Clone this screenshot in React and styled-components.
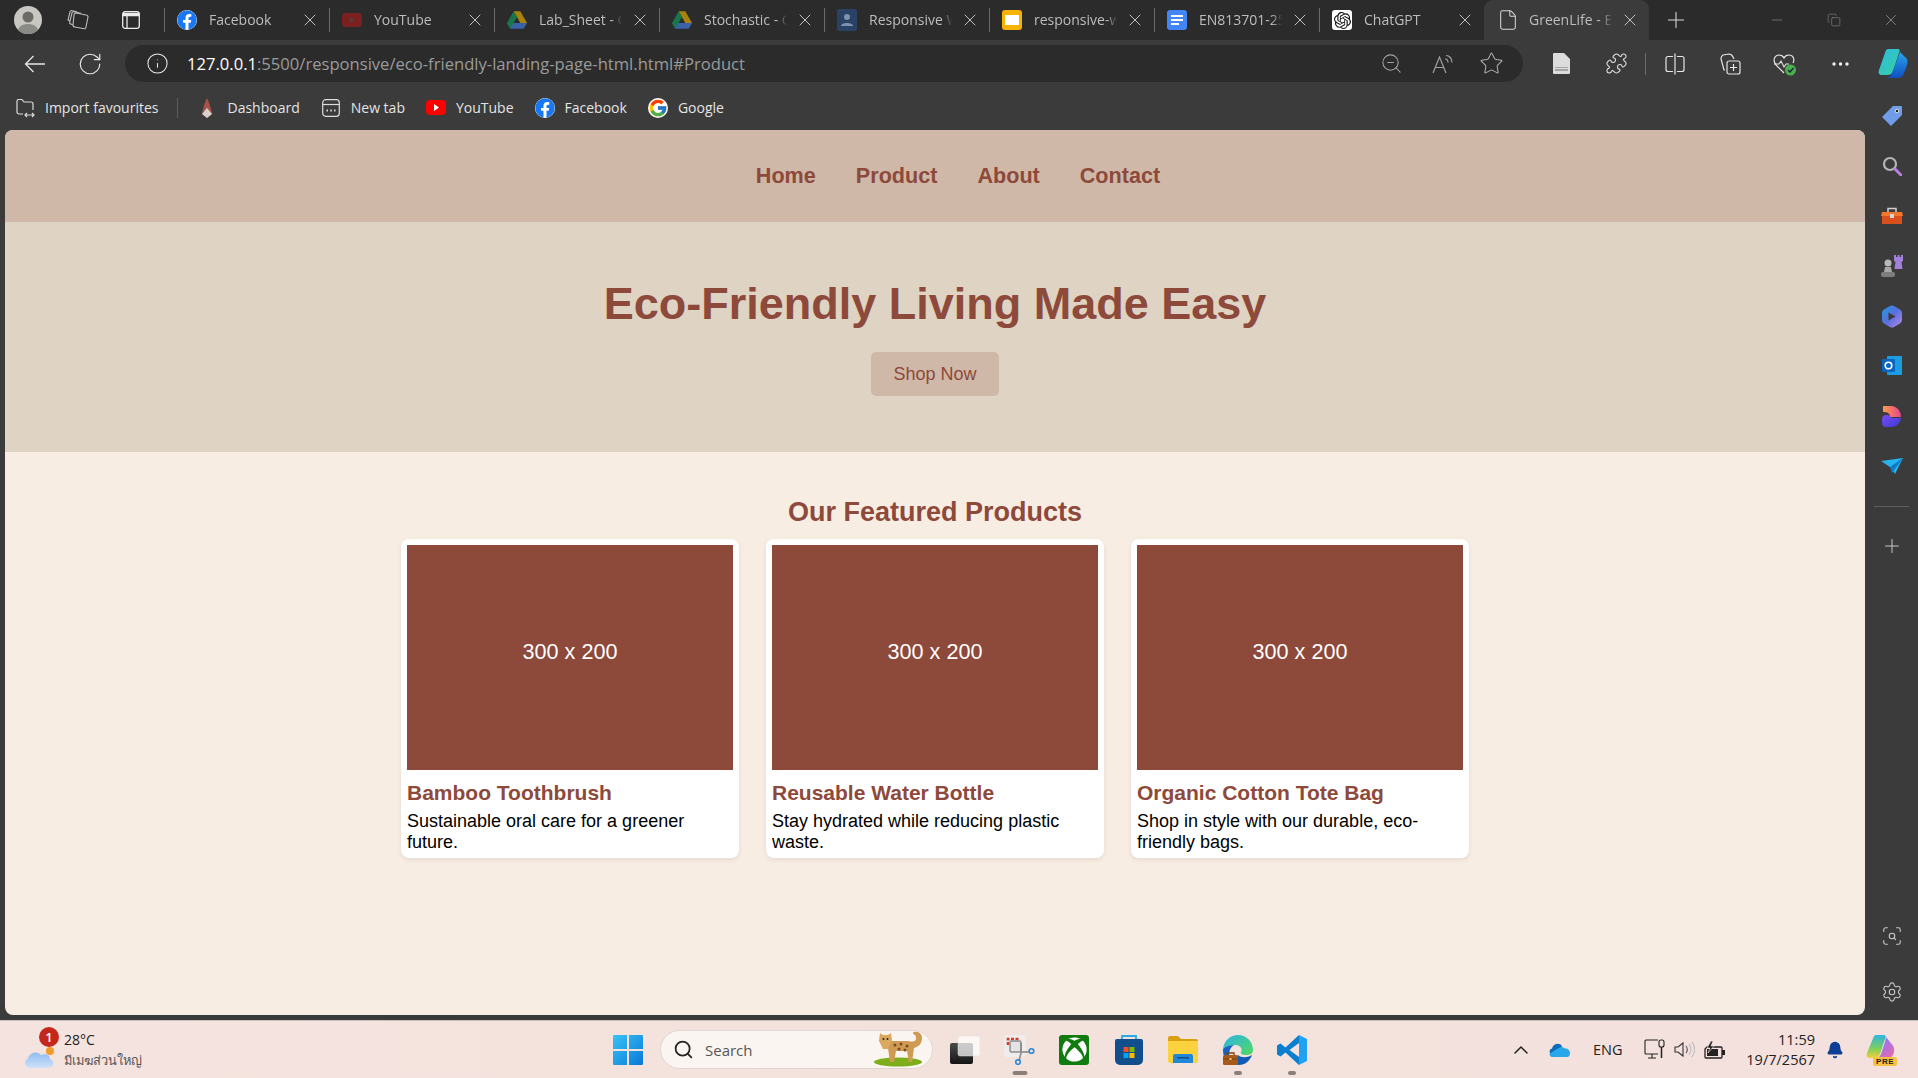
import React from "react";
import styled, { createGlobalStyle } from "styled-components";
import { RotateCw, Info, ZoomOut, Star, Puzzle, Plus, X, Minus, Copy, ChevronUp, Search, File, ScanSearch, Settings, Bell } from "lucide-react";
import { FaFacebook, FaXbox } from "react-icons/fa";
import { FcGoogle } from "react-icons/fc";
import { SiOpenai } from "react-icons/si";

const GlobalStyle = createGlobalStyle`
  html, body { margin: 0; padding: 0; height: 100%; overflow: hidden; }
  * { box-sizing: border-box; }
  body { font-family: "Open Sans", "Noto Sans", sans-serif; background: #3b3b3b; }
`;

/* ---------- small drawings ---------- */

const Drive = () => (
  <svg width="20" height="18" viewBox="0 0 24 21" opacity=".72">
    <path d="M8 0h8l8 14h-8z" fill="#d9a400" />
    <path d="M0 14h24l-4 7H4z" fill="#3f78d8" />
    <path d="M8 0L0 14l4 7 8-14z" fill="#12925a" />
  </svg>
);

const ResponsiveFav = () => (
  <svg width="20" height="22" viewBox="0 0 20 22" opacity=".75">
    <rect width="20" height="22" rx="2" fill="#2c4a7c" />
    <circle cx="10" cy="8" r="3" fill="#9db4d6" />
    <path d="M4 17c0-4 12-4 12 0z" fill="#9db4d6" />
  </svg>
);

const SlidesFav = () => (
  <svg width="20" height="20" viewBox="0 0 20 20">
    <rect width="20" height="20" rx="3" fill="#f6b400" />
    <rect x="3" y="5" width="14" height="10" fill="#fff" />
  </svg>
);

const DocsFav = () => (
  <svg width="20" height="20" viewBox="0 0 20 20">
    <rect width="20" height="20" rx="3" fill="#4285f4" />
    <path d="M4 5h12v2H4zm0 4h12v2H4zm0 4h8v2H4z" fill="#fff" />
  </svg>
);

const GptFav = () => (
  <FavBox>
    <SiOpenai size={17} color="#111" />
  </FavBox>
);

const Avatar = () => (
  <svg width="28" height="28" viewBox="0 0 28 28">
    <circle cx="14" cy="14" r="14" fill="#c9c7c2" />
    <circle cx="14" cy="11" r="5.5" fill="#6b6b68" />
    <path d="M4 24c2-8 18-8 20 0a14 14 0 0 1-20 0z" fill="#8a8a86" />
  </svg>
);

const Workspaces = () => (
  <svg width="22" height="20" viewBox="0 0 22 20" fill="none" stroke="#bdbdbd" strokeWidth="1.1">
    <path d="M9 3l10 2c1 0 2 1 2 2l-2 10c0 1-1 2-2 1.7L8 17c-1 0-2-1-2-2L7 5c0-1 1-2 2-2z" />
    <path d="M6 15L4 14c-1 0-1.5-1-1.3-2L5 3c0-1 1-1.5 2-1.3l7 1.5" />
    <path d="M3 11L1 10 3 2c0-1 1-1.5 2-1.3l5 1" />
  </svg>
);

const TabsIcon = () => (
  <svg width="18" height="18" viewBox="0 0 18 18" fill="none" stroke="#ececec" strokeWidth="1.3">
    <rect x=".7" y=".7" width="16.6" height="16.6" rx="2.5" />
    <path d="M.7 3.5h16.6" strokeWidth="3.5" />
    <path d="M5 5v12" />
  </svg>
);

const BackArrow = () => (
  <svg width="22" height="18" viewBox="0 0 22 18" fill="none" stroke="#e6e6e6" strokeWidth="1.3">
    <path d="M21 9H1.5M9.5 1L1.5 9l8 8" />
  </svg>
);

const ImportFav = () => (
  <svg width="20" height="20" viewBox="0 0 20 20" fill="none" stroke="#dcdcdc" strokeWidth="1.2">
    <path d="M8 16H4a2 2 0 0 1-2-2V3a1.5 1.5 0 0 1 1.5-1.5H7L9 4h7a2 2 0 0 1 2 2v6" />
    <path d="M10 17h9M12 15l-2 2 2 2M17 15l2 2-2 2" />
  </svg>
);

const Rocket = () => (
  <svg width="14" height="20" viewBox="0 0 14 20">
    <path d="M7 0c2 4 4 10 5 16l-5 4-5-4C3 10 5 4 7 0z" fill="#a8534a" />
    <path d="M7 10l5 6-5 4-5-4z" fill="#d8d0cb" />
  </svg>
);

const NewTabFav = () => (
  <svg width="18" height="18" viewBox="0 0 18 18" fill="none" stroke="#dcdcdc" strokeWidth="1.2">
    <rect x=".7" y=".7" width="16.6" height="16.6" rx="3" />
    <path d="M.7 5.5h16.6" />
    <path d="M4.5 11.5H6M8.3 11.5h1.5M12 11.5h1.5" strokeWidth="1.8" />
  </svg>
);

const YtBadge = () => (
  <svg width="20" height="15" viewBox="0 0 20 15">
    <rect width="20" height="15" rx="4" fill="#f00" />
    <path d="M8 4l5 3.5L8 11z" fill="#fff" />
  </svg>
);

const YtDim = () => (
  <svg width="20" height="14" viewBox="0 0 20 14">
    <rect width="20" height="14" rx="4" fill="#7c1f1f" />
    <path d="M8 4l5 3-5 3z" fill="#5c3a3a" />
  </svg>
);

const ReadAloud = () => (
  <svg width="22" height="20" viewBox="0 0 22 20" fill="none" stroke="#a0a0a0" strokeWidth="1.2">
    <path d="M1 19L7.5 3 14 19M3.5 13.5h8" />
    <path d="M13 5c2 0 3 1.5 3 3.5M14 1.5c3.5 0 6 3 6 7" />
  </svg>
);

const PageSave = () => (
  <svg width="17" height="21" viewBox="0 0 17 21">
    <path d="M0 1a1 1 0 0 1 1-1h10l6 6v14a1 1 0 0 1-1 1H1a1 1 0 0 1-1-1z" fill="#dcdcdc" />
    <path d="M2 14h13v4H2z" fill="#a5a5a5" />
    <path d="M2 15.5h13" stroke="#dcdcdc" />
  </svg>
);

const SplitIcon = () => (
  <svg width="20" height="22" viewBox="0 0 20 22" fill="none" stroke="#e6e6e6" strokeWidth="1.2">
    <path d="M8 3.5H3a2 2 0 0 0-2 2v11a2 2 0 0 0 2 2h5M12 3.5h5a2 2 0 0 1 2 2v11a2 2 0 0 1-2 2h-5" />
    <path d="M10 .5v21" />
  </svg>
);

const CollectionsIcon = () => (
  <svg width="21" height="22" viewBox="0 0 21 22" fill="none" stroke="#e6e6e6" strokeWidth="1.2">
    <rect x="7" y="8" width="13" height="13" rx="2" />
    <path d="M13.5 11v7M10 14.5h7" />
    <path d="M5 17H4L1 6c0-2 0-3 2-4l6-1c2 0 3 1 4 3l1 2" />
  </svg>
);

const HealthIcon = () => (
  <svg width="24" height="24" viewBox="0 0 24 24" fill="none">
    <path d="M11 21L3 13C-1 8 2 3 6 3c2 0 4 1 5 3 1-2 3-3 5-3 4 0 6 4 4 8" stroke="#e6e6e6" strokeWidth="1.2" />
    <path d="M1 12h5l2-3 3 6 2-3h3" stroke="#e6e6e6" strokeWidth="1.1" />
    <circle cx="17.5" cy="18" r="5.5" fill="#4caf50" />
    <path d="M15 18l2 2 3.5-4" stroke="#123" strokeWidth="1.2" />
  </svg>
);

const DotsIcon = () => (
  <svg width="17" height="4" viewBox="0 0 17 4" fill="#f0f0f0">
    <circle cx="2" cy="2" r="1.7" />
    <circle cx="8.5" cy="2" r="1.7" />
    <circle cx="15" cy="2" r="1.7" />
  </svg>
);

const CopilotMark = () => (
  <svg width="30" height="29" viewBox="0 0 30 29">
    <defs>
      <linearGradient id="cpA" x1="0" y1="0" x2="1" y2="1">
        <stop offset="0" stopColor="#2fb8e8" />
        <stop offset="1" stopColor="#36d39a" />
      </linearGradient>
      <linearGradient id="cpB" x1="0" y1="0" x2="0" y2="1">
        <stop offset="0" stopColor="#2aa5f0" />
        <stop offset="1" stopColor="#0f4fc0" />
      </linearGradient>
    </defs>
    <path d="M8 1c1-1 2-1 3-1h9c2 0 2 2 1 4l-6 18c-1 3-3 4-6 4H4c-3 0-4-2-3-5z" fill="url(#cpA)" />
    <path d="M22 3l5 5c3 2 3 5 2 8l-3 8c-1 3-3 5-7 5H7c4 0 6-2 7-5l5-13z" fill="url(#cpB)" />
  </svg>
);

const TagIcon = () => (
  <svg width="20" height="20" viewBox="0 0 20 20">
    <path d="M11 0h8a1 1 0 0 1 1 1v8L9 20 0 11z" fill="#6f9de8" />
    <circle cx="15" cy="5" r="1.8" fill="#222" stroke="#ddd" />
  </svg>
);

const SearchSide = () => (
  <svg width="20" height="20" viewBox="0 0 20 20" fill="none">
    <circle cx="8" cy="8" r="6" stroke="#b5b5b5" strokeWidth="2.2" />
    <path d="M13 13l6 6" stroke="#b77fe0" strokeWidth="3" strokeLinecap="round" />
  </svg>
);

const ToolboxIcon = () => (
  <svg width="22" height="18" viewBox="0 0 22 18">
    <path d="M7 5V1.5h8V5" fill="none" stroke="#cfcfcf" strokeWidth="1.5" />
    <path d="M1 5h20l1 4H0z" fill="#f2772b" />
    <path d="M1 9h20v8H1z" fill="#d8501c" />
    <rect x="9" y="7" width="4" height="4" fill="#d5d5d5" />
  </svg>
);

const ChessIcon = () => (
  <svg width="22" height="22" viewBox="0 0 22 22">
    <path d="M13 0h2v2h1.5V0h2v2H20V0h2v6l-1.5 1 1 7h-8l1-7L13 6z" fill="#a27fd8" />
    <circle cx="7" cy="8" r="3.5" fill="#b8b8b8" />
    <path d="M4 12h6l1 5H3z" fill="#a8a8a8" />
    <rect y="17" width="14" height="5" rx="2" fill="#7d7d7d" />
  </svg>
);

const M365Icon = () => (
  <svg width="20" height="23" viewBox="0 0 20 23">
    <defs>
      <linearGradient id="m365" x1="0" y1="0" x2="1" y2="1">
        <stop offset="0" stopColor="#1f9ae0" />
        <stop offset=".5" stopColor="#5a6fdc" />
        <stop offset="1" stopColor="#b98ae6" />
      </linearGradient>
    </defs>
    <path fillRule="evenodd" d="M8 1a4 4 0 0 1 4 0l6 3.5A4 4 0 0 1 20 8v7a4 4 0 0 1-2 3.5L12 22a4 4 0 0 1-4 0l-6-3.5A4 4 0 0 1 0 15V8a4 4 0 0 1 2-3.5zM6.5 7.5v8l7-4z" fill="url(#m365)" />
  </svg>
);

const OutlookIcon = () => (
  <svg width="20" height="20" viewBox="0 0 20 20">
    <rect x="5" y="0" width="15" height="19" rx="1" fill="#1b9de2" />
    <rect x="0" y="3" width="13" height="13" rx="1" fill="#0a64c0" />
    <circle cx="6.5" cy="9.5" r="3.3" fill="none" stroke="#fff" strokeWidth="1.6" />
  </svg>
);

const DesignerIcon = () => (
  <svg width="19" height="21" viewBox="0 0 19 21">
    <defs>
      <linearGradient id="dsA" x1="0" y1="0" x2="1" y2="0">
        <stop offset="0" stopColor="#fb9a4b" />
        <stop offset="1" stopColor="#e8448f" />
      </linearGradient>
      <linearGradient id="dsB" x1="0" y1="0" x2="1" y2="1">
        <stop offset="0" stopColor="#7a4cf0" />
        <stop offset="1" stopColor="#3a3ad8" />
      </linearGradient>
    </defs>
    <path d="M1 0h8c6 0 10 5 10 11H8C8 7 5 6 1 6z" fill="url(#dsA)" />
    <path d="M4 9c4 0 5 2 6 3h9c-1 6-5 9-10 9H4c-3 0-4-2-4-6s1-6 4-6z" fill="url(#dsB)" />
  </svg>
);

const SendIcon = () => (
  <svg width="22" height="16" viewBox="0 0 22 16">
    <path d="M0 3L22 0 14 16 9 9z" fill="#24b4ee" />
    <path d="M9 9L22 0 11 15z" fill="#0f78c8" />
  </svg>
);

const WindowsLogo = () => (
  <svg width="30" height="30" viewBox="0 0 30 30">
    <defs>
      <linearGradient id="winA" x1="0" y1="0" x2="1" y2="1">
        <stop offset="0" stopColor="#39c4f5" />
        <stop offset="1" stopColor="#0878d8" />
      </linearGradient>
    </defs>
    <path d="M0 1a1 1 0 0 1 1-1h13v14H0zM16 0h13a1 1 0 0 1 1 1v13H16zM0 16h14v14H1a1 1 0 0 1-1-1zM16 16h14v13a1 1 0 0 1-1 1H16z" fill="url(#winA)" />
  </svg>
);

const Leopard = () => (
  <svg width="52" height="36" viewBox="0 0 52 36">
    <ellipse cx="24" cy="31" rx="24" ry="4.5" fill="#7fae1c" />
    <path d="M14 10h20c5 1 8 1 8-3 0-4-3-3-3-5 0-2 9-2 9 5 0 6-4 9-8 10l-2 14h-3l-2-11H22l-2 11h-4l-2-14c-2-1-2-4 0-7z" fill="#cf9a52" />
    <circle cx="21" cy="14" r="1.5" fill="#7a4a24" />
    <circle cx="27" cy="13" r="1.5" fill="#7a4a24" />
    <circle cx="33" cy="15" r="1.5" fill="#7a4a24" />
    <circle cx="25" cy="18" r="1.5" fill="#7a4a24" />
    <circle cx="31" cy="19" r="1.5" fill="#7a4a24" />
    <path d="M6 2l3 2h5l3-2 1 8-4 8h-5L5 10z" fill="#dba860" />
    <circle cx="9.5" cy="8" r="1" fill="#222" />
    <circle cx="13.5" cy="8" r="1" fill="#222" />
  </svg>
);

const TaskView = () => (
  <svg width="30" height="30" viewBox="0 0 30 30">
    <defs>
      <linearGradient id="tvA" x1="0" y1="0" x2="0" y2="1">
        <stop offset="0" stopColor="#4a4a4a" />
        <stop offset="1" stopColor="#151515" />
      </linearGradient>
    </defs>
    <rect x="0" y="8" width="23" height="21" rx="2" fill="url(#tvA)" />
    <rect x="8" y="1" width="22" height="20" rx="2" fill="#fff" fillOpacity=".72" stroke="#ddd" strokeWidth=".5" />
  </svg>
);

const SnipIcon = () => (
  <svg width="31" height="30" viewBox="0 0 31 30">
    <rect x="0" y="0" width="22" height="22" rx="3" fill="#efecec" />
    <path d="M4 10V4h12" fill="none" stroke="#d53a2a" strokeWidth="2.6" strokeDasharray="3 1.5" />
    <rect x="6" y="6" width="11" height="11" rx="1.5" fill="#e4e2e2" stroke="#8f8f8f" strokeWidth="1.5" />
    <path d="M17 8v10l-2 8" stroke="#8a8a8a" strokeWidth="1.6" fill="none" />
    <path d="M17 17h8" stroke="#8a8a8a" strokeWidth="1.6" />
    <circle cx="14" cy="27" r="2.3" fill="none" stroke="#2b88d8" strokeWidth="1.6" />
    <circle cx="27.5" cy="16" r="2.3" fill="none" stroke="#2b88d8" strokeWidth="1.6" />
  </svg>
);

const StoreIcon = () => (
  <svg width="30" height="30" viewBox="0 0 30 30">
    <path d="M8 5V1h14v4" fill="none" stroke="#29a9e8" strokeWidth="1.8" />
    <path d="M1 6a2 2 0 0 1 2-2h24a2 2 0 0 1 2 2v19a5 5 0 0 1-5 5H6a5 5 0 0 1-5-5z" fill="#134e8c" />
    <rect x="9.5" y="12" width="5" height="5" fill="#f25022" />
    <rect x="15.5" y="12" width="5" height="5" fill="#7fba00" />
    <rect x="9.5" y="18" width="5" height="5" fill="#00a4ef" />
    <rect x="15.5" y="18" width="5" height="5" fill="#ffb900" />
  </svg>
);

const FolderIcon = () => (
  <svg width="30" height="27" viewBox="0 0 30 27">
    <path d="M0 2a2 2 0 0 1 2-2h8l3 3h15a2 2 0 0 1 2 2v4H0z" fill="#d9a013" />
    <path d="M0 5h30v20a2 2 0 0 1-2 2H2a2 2 0 0 1-2-2z" fill="#fcd33f" />
    <path d="M5 20a2 2 0 0 1 2-2h16a2 2 0 0 1 2 2v7H5z" fill="#2188d9" />
    <rect x="9" y="21" width="12" height="1.5" fill="#0c4f8a" />
  </svg>
);

const EdgeIcon = () => (
  <svg width="30" height="30" viewBox="0 0 30 30">
    <defs>
      <linearGradient id="edgeA" x1="0" y1="0" x2="1" y2="1">
        <stop offset="0" stopColor="#2bb5e8" />
        <stop offset=".9" stopColor="#4ed66b" />
      </linearGradient>
    </defs>
    <path d="M0 14C1 5 8 0 15 0c9 0 15 7 15 15 0 4-3 5-7 5-4 0-6-1-5-3 2-3-1-7-5-7-6 0-11 2-13 4z" fill="url(#edgeA)" />
    <path d="M0 14c3-3 7-4 11-4-4 2-6 8-4 13l-5 0C0 20 0 17 0 14z" fill="#1464c8" />
    <path d="M15 20c3 3 9 3 14 0-2 6-7 10-13 10-3 0-5-1-7-2z" fill="#0f5bb5" />
    <rect x="0" y="20" width="15" height="10" rx="1.5" fill="#a85a1a" />
    <path d="M4 20v-2h7v2" fill="none" stroke="#7a4310" strokeWidth="1.3" />
    <path d="M0 24h15" stroke="#7a4310" />
    <rect x="6.5" y="23" width="2" height="2" fill="#f0c870" />
  </svg>
);

const VscodeIcon = () => (
  <svg width="30" height="30" viewBox="0 0 30 30">
    <path d="M22 0L8.5 12.5l-5-4L0 10.5v9l3.5 2 5-4L22 30v-8l-9.5-7L22 8z" fill="#0a7fd0" />
    <path d="M22 0l8 4v22l-8 4z" fill="#1fa2f2" />
  </svg>
);

const OneDrive = () => (
  <svg width="21" height="14" viewBox="0 0 21 14">
    <path d="M2 11C0 10 0 6 3 5.5 4 1 10-1 13 3l-3 8z" fill="#0f6cbd" />
    <path d="M4 14c-3 0-4-2-3-3.5L8 6c3-2.5 7-2 8-.5 3 0 5 2 5 4.5s-1 4-3 4z" fill="#28a8ea" />
  </svg>
);

const NetworkIcon = () => (
  <svg width="21" height="21" viewBox="0 0 21 21" fill="none" stroke="#222" strokeWidth="1.1">
    <path d="M14 1H2a1 1 0 0 0-1 1v12a1 1 0 0 0 1 1h12" />
    <path d="M4 19h8M8 15v4" />
    <rect x="15" y="1" width="5" height="7" rx="2" />
    <path d="M17.5 8v11" strokeWidth="1.5" />
  </svg>
);

const VolumeIcon = () => (
  <svg width="21" height="17" viewBox="0 0 21 17" fill="none">
    <path d="M1 6h3l5-4v13l-5-4H1z" stroke="#333" strokeWidth="1.1" />
    <path d="M12 5c1.5 2 1.5 5 0 7" stroke="#555" strokeWidth="1.1" />
    <path d="M15 3c2.5 3.5 2.5 7.5 0 11M18 1c3.5 5 3.5 10 0 15" stroke="#bbb" strokeWidth="1.1" />
  </svg>
);

const BatteryIcon = () => (
  <svg width="21" height="18" viewBox="0 0 21 18">
    <path d="M3 6h14a1 1 0 0 1 1 1v9a1 1 0 0 1-1 1H2a1 1 0 0 1-1-1V8z" fill="none" stroke="#222" strokeWidth="1.3" />
    <rect x="18" y="9" width="3" height="5" fill="#222" />
    <rect x="3" y="8" width="11" height="7" fill="#222" />
    <path d="M7 0L3 7h3L4 12l6-7H7l2-5z" fill="#222" stroke="#f4e3df" strokeWidth=".6" />
  </svg>
);

const CopilotRainbow = () => (
  <svg width="29" height="24" viewBox="0 0 29 24">
    <defs>
      <linearGradient id="cpL" x1="0" y1="0" x2="0" y2="1">
        <stop offset="0" stopColor="#2eb6e0" />
        <stop offset=".6" stopColor="#7fd05a" />
        <stop offset="1" stopColor="#f5cf3c" />
      </linearGradient>
      <linearGradient id="cpR" x1="0" y1="0" x2="1" y2="1">
        <stop offset="0" stopColor="#4a8df0" />
        <stop offset=".5" stopColor="#b071e0" />
        <stop offset="1" stopColor="#f06aa0" />
      </linearGradient>
    </defs>
    <path d="M8 1c1-1 2-1 3-1h7c2 0 2 2 1 4l-5 15c-1 3-3 4-6 4H4c-3 0-4-2-3-5z" fill="url(#cpL)" />
    <path d="M20 2l4 5c3 3 5 6 4 10-1 4-3 6-6 6H8c4 0 6-1 7-4l4-12z" fill="url(#cpR)" />
  </svg>
);

const WeatherIcon = () => (
  <WeatherGlyph>
    <svg width="30" height="24" viewBox="0 0 30 24">
      <defs>
        <linearGradient id="cloudA" x1="0" y1="0" x2="0" y2="1">
          <stop offset="0" stopColor="#8fbcf0" />
          <stop offset="1" stopColor="#cfe2fa" />
        </linearGradient>
      </defs>
      <circle cx="25" cy="6" r="4" fill="#f09a2a" />
      <path d="M5 23a5 5 0 0 1-2-9.5C4 8 12 5 16 10c5-2 9 0 9 4 4 1 5 9-2 9z" fill="url(#cloudA)" />
    </svg>
  </WeatherGlyph>
);

/* ---------- data ---------- */

const roundFb = { background: "#fff", borderRadius: "50%" };

const tabs = [
  { title: "Facebook", icon: <FaFacebook size={20} color="#1877f2" style={roundFb} /> },
  { title: "YouTube", icon: <YtDim /> },
  { title: "Lab_Sheet - G", icon: <Drive /> },
  { title: "Stochastic - G", icon: <Drive /> },
  { title: "Responsive W", icon: <ResponsiveFav /> },
  { title: "responsive-w", icon: <SlidesFav /> },
  { title: "EN813701-25", icon: <DocsFav /> },
  { title: "ChatGPT", icon: <GptFav /> },
  { title: "GreenLife - E", icon: <File size={22} color="#d8d8d8" strokeWidth={1.1} />, active: true },
];

const bookmarks = [
  { title: "Dashboard", icon: <Rocket /> },
  { title: "New tab", icon: <NewTabFav /> },
  { title: "YouTube", icon: <YtBadge /> },
  { title: "Facebook", icon: <FaFacebook size={20} color="#1877f2" style={roundFb} /> },
  { title: "Google", icon: <FcGoogle size={20} style={roundFb} /> },
];

const products = [
  { title: "Bamboo Toothbrush", text: "Sustainable oral care for a greener future." },
  { title: "Reusable Water Bottle", text: "Stay hydrated while reducing plastic waste." },
  { title: "Organic Cotton Tote Bag", text: "Shop in style with our durable, eco-friendly bags." },
];

/* ---------- page ---------- */

function App() {
  return (
    <Screen>
      <GlobalStyle />
      <TabStrip>
        <StripLeft>
          <Avatar />
          <Workspaces />
          <TabsIcon />
        </StripLeft>
        {tabs.map((t, i) => (
          <Tab key={t.title} $active={t.active} $noSep={i > 0 && tabs[i - 1].active}>
            <TabFav>{t.icon}</TabFav>
            <TabTitle>{t.title}</TabTitle>
            <X size={20} color="#d0d0d0" strokeWidth={1.1} />
          </Tab>
        ))}
        <NewTab>
          <Plus size={26} color="#d8d8d8" strokeWidth={1} />
        </NewTab>
        <WindowButtons>
          <Minus size={16} color="#7c7c7c" strokeWidth={1.2} />
          <Copy size={14} color="#7c7c7c" strokeWidth={1.2} />
          <X size={18} color="#8a8a8a" strokeWidth={1.2} />
        </WindowButtons>
      </TabStrip>

      <Toolbar>
        <ToolButton><BackArrow /></ToolButton>
        <ToolButton><RotateCw size={26} strokeWidth={1.1} /></ToolButton>
        <Address>
          <Info size={23} color="#e8e8e8" strokeWidth={1.1} />
          <Url><b>127.0.0.1</b>:5500/responsive/eco-friendly-landing-page-html.html#Product</Url>
          <AddressIcons>
            <ZoomOut size={23} color="#a0a0a0" strokeWidth={1.1} />
            <ReadAloud />
            <Star size={25} color="#b0b0b0" strokeWidth={1} />
          </AddressIcons>
        </Address>
        <ToolGroup>
          <ToolButton><PageSave /></ToolButton>
          <ToolButton><Puzzle size={23} strokeWidth={1.1} /></ToolButton>
          <ToolDivider />
          <ToolButton><SplitIcon /></ToolButton>
          <ToolButton><CollectionsIcon /></ToolButton>
          <ToolButton><HealthIcon /></ToolButton>
          <ToolButton><DotsIcon /></ToolButton>
          <CopilotSlot><CopilotMark /></CopilotSlot>
        </ToolGroup>
      </Toolbar>

      <Body>
        <Main>
          <BookmarkBar>
            <Bookmark>
              <ImportFav />
              <span>Import favourites</span>
            </Bookmark>
            <BookmarkDivider />
            {bookmarks.map((b) => (
              <Bookmark key={b.title}>
                <BookmarkFav>{b.icon}</BookmarkFav>
                <span>{b.title}</span>
              </Bookmark>
            ))}
          </BookmarkBar>

          <Page>
            <Nav>
              <NavLink>Home</NavLink>
              <NavLink>Product</NavLink>
              <NavLink>About</NavLink>
              <NavLink>Contact</NavLink>
            </Nav>
            <Hero>
              <HeroTitle>Eco-Friendly Living Made Easy</HeroTitle>
              <ShopButton>Shop Now</ShopButton>
            </Hero>
            <Featured>
              <FeaturedTitle>Our Featured Products</FeaturedTitle>
              <ProductRow>
                {products.map((p) => (
                  <ProductCard key={p.title}>
                    <ProductImage>300 x 200</ProductImage>
                    <ProductName>{p.title}</ProductName>
                    <ProductText>{p.text}</ProductText>
                  </ProductCard>
                ))}
              </ProductRow>
            </Featured>
          </Page>
        </Main>

        <Sidebar>
          <SideItem><TagIcon /></SideItem>
          <SideItem><SearchSide /></SideItem>
          <SideItem><ToolboxIcon /></SideItem>
          <SideItem><ChessIcon /></SideItem>
          <SideItem><M365Icon /></SideItem>
          <SideItem><OutlookIcon /></SideItem>
          <SideItem><DesignerIcon /></SideItem>
          <SideItem><SendIcon /></SideItem>
          <SideDivider />
          <SideItem><Plus size={22} color="#c8c8c8" strokeWidth={1.1} /></SideItem>
          <SideBottom>
            <SideItem><ScanSearch size={22} color="#c8c8c8" strokeWidth={1.2} /></SideItem>
            <SideItem><Settings size={22} color="#c8c8c8" strokeWidth={1.2} /></SideItem>
          </SideBottom>
        </Sidebar>
      </Body>

      <Taskbar>
        <Weather>
          <WeatherIcon />
          <WeatherBadge>1</WeatherBadge>
          <WeatherText>
            <span>28°C</span>
            <WeatherNote>มีเมฆส่วนใหญ่</WeatherNote>
          </WeatherText>
        </Weather>
        <TaskCenter>
          <WindowsLogo />
          <SearchPill>
            <Search size={21} color="#222" strokeWidth={2} />
            <span>Search</span>
            <LeopardSlot><Leopard /></LeopardSlot>
          </SearchPill>
          <TaskApp><TaskView /></TaskApp>
          <TaskApp $dot="wide"><SnipIcon /></TaskApp>
          <TaskApp><XboxTile><FaXbox size={25} color="#fff" /></XboxTile></TaskApp>
          <TaskApp><StoreIcon /></TaskApp>
          <TaskApp><FolderIcon /></TaskApp>
          <TaskApp $dot="small"><EdgeIcon /></TaskApp>
          <TaskApp $dot="small"><VscodeIcon /></TaskApp>
        </TaskCenter>
        <Tray>
          <ChevronUp size={24} color="#222" strokeWidth={1.5} />
          <OneDriveSlot><OneDrive /></OneDriveSlot>
          <TrayText>ENG</TrayText>
          <TrayIcons>
            <NetworkIcon />
            <VolumeIcon />
            <BatteryIcon />
          </TrayIcons>
          <Clock>
            <span>11:59</span>
            <span>19/7/2567</span>
          </Clock>
          <BellSlot><Bell size={18} color="#0f3f94" fill="#0f3f94" /></BellSlot>
          <PreWrap>
            <CopilotRainbow />
            <PreTag>PRE</PreTag>
          </PreWrap>
        </Tray>
      </Taskbar>
    </Screen>
  );
}

export default App;

const brown = "#8d493a";

const Screen = styled.div`
  width: 1918px;
  height: 1078px;
  display: flex;
  flex-direction: column;
  background: #3b3b3b;
  overflow: hidden;
`;

const TabStrip = styled.div`
  height: 40px;
  flex: none;
  display: flex;
  background: #2b2b2b;
  color: #d8d8d8;
`;
const StripLeft = styled.div`
  width: 164px;
  flex: none;
  padding-left: 14px;
  display: flex;
  align-items: center;
  gap: 25px;
  & > svg:last-child {
    margin-left: 8px;
  }
`;
const Tab = styled.div`
  position: relative;
  width: 165px;
  flex: none;
  display: flex;
  align-items: center;
  padding: 0 9px 0 13px;
  font-size: 14px;
  background: ${(p) => (p.$active ? "#3b3b3b" : "transparent")};
  border-radius: ${(p) => (p.$active ? "9px 9px 0 0" : "0")};
  &::before {
    content: "";
    display: ${(p) => (p.$active || p.$noSep ? "none" : "block")};
    position: absolute;
    left: 0;
    top: 8px;
    height: 24px;
    width: 1px;
    background: #6a6a6a;
  }
`;
const TabFav = styled.div`
  width: 32px;
  flex: none;
  display: flex;
  align-items: center;
`;
const FavBox = styled.div`
  width: 20px;
  height: 20px;
  background: #fff;
  border-radius: 3px;
  display: flex;
  align-items: center;
  justify-content: center;
`;
const TabTitle = styled.div`
  flex: 1;
  min-width: 0;
  margin-right: 8px;
  padding-bottom: 2px;
  white-space: nowrap;
  overflow: hidden;
  color: #bdbdbd;
  -webkit-mask-image: linear-gradient(to right, #000 88%, transparent);
  mask-image: linear-gradient(to right, #000 88%, transparent);
`;
const NewTab = styled.div`
  width: 54px;
  display: flex;
  align-items: center;
  justify-content: center;
`;
const WindowButtons = styled.div`
  margin-left: auto;
  width: 170px;
  padding: 0 18px 0 21px;
  display: flex;
  align-items: center;
  justify-content: space-between;
`;

const Toolbar = styled.div`
  height: 45px;
  flex: none;
  padding: 5px 3px 3px 13px;
  display: flex;
  align-items: center;
  gap: 11px;
  background: #3b3b3b;
  color: #e6e6e6;
`;
const ToolButton = styled.div`
  width: 44px;
  height: 36px;
  flex: none;
  display: flex;
  align-items: center;
  justify-content: center;
`;
const Address = styled.div`
  flex: 1;
  height: 37px;
  margin-left: 2px;
  padding: 0 19px 0 21px;
  display: flex;
  align-items: center;
  background: #2b2b2b;
  border-radius: 19px;
`;
const Url = styled.div`
  margin-left: 18px;
  font-size: 16.6px;
  color: #9a9a9a;
  white-space: nowrap;
  & b {
    font-weight: 400;
    color: #fff;
  }
`;
const AddressIcons = styled.div`
  margin-left: auto;
  display: flex;
  align-items: center;
  gap: 27px;
  & > svg:nth-child(2) {
    margin: 0 -2px 0 2px;
  }
`;
const ToolGroup = styled.div`
  margin-left: 5px;
  display: flex;
  align-items: center;
  gap: 11px;
`;
const ToolDivider = styled.div`
  width: 1px;
  height: 22px;
  margin: 0 -4px;
  background: #6a6a6a;
`;
const CopilotSlot = styled(ToolButton)`
  margin-left: -2px;
`;

const Body = styled.div`
  flex: 1;
  min-height: 0;
  display: flex;
`;
const Main = styled.div`
  flex: 1;
  min-width: 0;
  padding: 0 0 5px 5px;
  display: flex;
  flex-direction: column;
`;
const BookmarkBar = styled.div`
  height: 45px;
  flex: none;
  padding-left: 10px;
  display: flex;
  align-items: center;
  gap: 21px;
  font-size: 14px;
  color: #e4e4e4;
`;
const Bookmark = styled.div`
  display: flex;
  align-items: center;
  gap: 10px;
  white-space: nowrap;
`;
const BookmarkFav = styled.div`
  width: 20px;
  display: flex;
  align-items: center;
  justify-content: center;
`;
const BookmarkDivider = styled.div`
  width: 1px;
  height: 20px;
  margin: 0 -2px;
  background: #5c5c5c;
`;

const Page = styled.main`
  flex: 1;
  min-height: 0;
  background: #f8ede3;
  border-radius: 8px;
  overflow: hidden;
  font-family: "Liberation Sans", Arial, sans-serif;
`;
const Nav = styled.nav`
  height: 92px;
  padding-left: 46px;
  display: flex;
  align-items: center;
  justify-content: center;
  gap: 40px;
  background: #d0b8a8;
`;
const NavLink = styled.a`
  font-size: 21.6px;
  font-weight: 700;
  color: ${brown};
`;
const Hero = styled.section`
  height: 230px;
  padding-top: 56px;
  display: flex;
  flex-direction: column;
  align-items: center;
  background: #dfd3c3;
`;
const HeroTitle = styled.h1`
  margin: 0 0 22px;
  font-size: 45px;
  line-height: 52px;
  font-weight: 700;
  color: ${brown};
`;
const ShopButton = styled.button`
  width: 128px;
  height: 44px;
  border: 0;
  border-radius: 5px;
  background: #d0b8a8;
  color: ${brown};
  font-family: inherit;
  font-size: 18px;
`;
const Featured = styled.section`
  padding-top: 45px;
  display: flex;
  flex-direction: column;
  align-items: center;
`;
const FeaturedTitle = styled.h2`
  margin: 0 0 11px;
  font-size: 27px;
  line-height: 31px;
  font-weight: 700;
  color: ${brown};
`;
const ProductRow = styled.div`
  display: flex;
  gap: 27px;
`;
const ProductCard = styled.article`
  width: 338px;
  padding: 6px;
  background: #fff;
  border-radius: 8px;
  box-shadow: 0 2px 5px rgba(0, 0, 0, 0.08);
`;
const ProductImage = styled.div`
  height: 225px;
  padding-bottom: 12px;
  display: flex;
  align-items: center;
  justify-content: center;
  background: ${brown};
  color: #fff;
  font-size: 21.6px;
`;
const ProductName = styled.h3`
  margin: 11px 0 6px;
  font-size: 21px;
  line-height: 24px;
  font-weight: 700;
  color: ${brown};
`;
const ProductText = styled.p`
  margin: 0;
  font-size: 18px;
  line-height: 20.7px;
  color: #000;
`;

const Sidebar = styled.aside`
  width: 53px;
  flex: none;
  padding: 6px 0 3px;
  display: flex;
  flex-direction: column;
  align-items: center;
`;
const SideItem = styled.div`
  width: 53px;
  height: 50px;
  flex: none;
  display: flex;
  align-items: center;
  justify-content: center;
`;
const SideDivider = styled.div`
  width: 35px;
  height: 1px;
  flex: none;
  margin: 15px 0 14px;
  background: #5f5f5f;
`;
const SideBottom = styled.div`
  margin-top: auto;
  display: flex;
  flex-direction: column;
  gap: 6px;
`;

const Taskbar = styled.footer`
  height: 58px;
  flex: none;
  padding-left: 25px;
  display: flex;
  align-items: center;
  border-top: 1px solid #c9bfba;
  background: linear-gradient(90deg, #f5e3df, #f3e2dc 50%, #f4e1de);
  color: #222;
`;
const Weather = styled.div`
  position: relative;
  width: 588px;
  flex: none;
  display: flex;
  align-items: center;
  gap: 9px;
`;
const WeatherGlyph = styled.div`
  width: 30px;
  height: 24px;
  margin-top: 14px;
`;
const WeatherBadge = styled.div`
  position: absolute;
  left: 14px;
  top: -2px;
  width: 20px;
  height: 20px;
  border-radius: 50%;
  background: #c4271b;
  color: #fff;
  font-size: 13px;
  font-weight: 600;
  text-align: center;
  line-height: 20px;
`;
const WeatherText = styled.div`
  display: flex;
  flex-direction: column;
  font-size: 14px;
  line-height: 21px;
  font-family: "Open Sans", "Noto Sans", "DejaVu Sans", sans-serif;
`;
const WeatherNote = styled.span`
  font-size: 12.8px;
  color: #555;
`;
const TaskCenter = styled.div`
  width: 880px;
  flex: none;
  display: flex;
  align-items: center;
`;
const SearchPill = styled.div`
  position: relative;
  width: 273px;
  height: 39px;
  margin: 0 5px 0 17px;
  padding-left: 12px;
  display: flex;
  align-items: center;
  gap: 11px;
  background: #fbf5f1;
  border: 1px solid #dfd6d1;
  border-radius: 20px;
  font-size: 15px;
  color: #555;
`;
const LeopardSlot = styled.div`
  position: absolute;
  right: 6px;
  bottom: 1px;
  height: 36px;
`;
const TaskApp = styled.div`
  position: relative;
  width: 54.5px;
  height: 57px;
  flex: none;
  display: flex;
  align-items: center;
  justify-content: center;
  &::after {
    content: "";
    display: ${(p) => (p.$dot ? "block" : "none")};
    position: absolute;
    bottom: 3px;
    left: 50%;
    transform: translateX(-50%);
    width: ${(p) => (p.$dot === "wide" ? "15px" : "8px")};
    height: 4px;
    border-radius: 2px;
    background: #8a7f7a;
  }
`;
const XboxTile = styled.div`
  width: 30px;
  height: 30px;
  border-radius: 3px;
  background: #107c10;
  display: flex;
  align-items: center;
  justify-content: center;
`;
const Tray = styled.div`
  flex: 1;
  padding-left: 16px;
  display: flex;
  align-items: center;
  & > svg {
    flex: none;
  }
`;
const OneDriveSlot = styled.div`
  margin-left: 16px;
  display: flex;
`;
const TrayText = styled.div`
  width: 29px;
  margin: 0 22px 0 23px;
  font-size: 14.5px;
  white-space: nowrap;
`;
const TrayIcons = styled.div`
  flex: none;
  display: flex;
  align-items: center;
  gap: 9px;
`;
const Clock = styled.div`
  width: 86px;
  margin-left: 4px;
  display: flex;
  flex-direction: column;
  align-items: flex-end;
  font-size: 14.5px;
  line-height: 20px;
  white-space: nowrap;
`;
const BellSlot = styled.div`
  margin-left: 11px;
  display: flex;
`;
const PreWrap = styled.div`
  position: relative;
  margin-left: 22px;
  width: 30px;
  height: 30px;
`;
const PreTag = styled.div`
  position: absolute;
  right: -1px;
  bottom: -1px;
  padding: 0 3px;
  background: #f5c242;
  border-radius: 2px;
  font-family: "Liberation Sans", sans-serif;
  font-size: 8px;
  line-height: 9px;
  font-weight: 700;
  letter-spacing: 0.5px;
  color: #222;
`;
